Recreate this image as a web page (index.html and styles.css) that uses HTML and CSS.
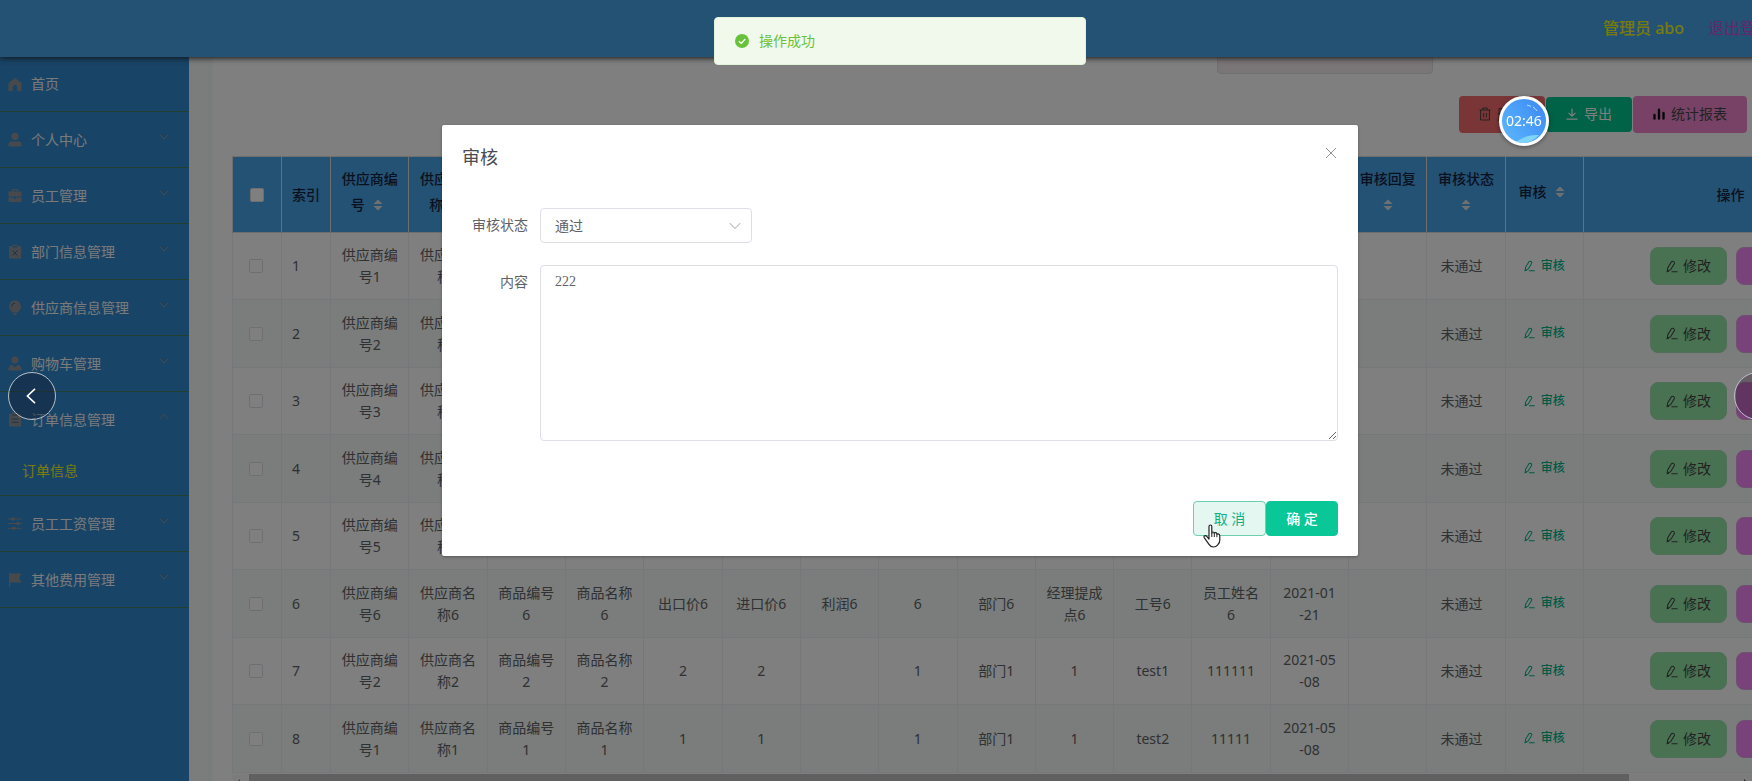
FILE: index.html
```html
<!DOCTYPE html>
<html lang="zh-CN">
<head>
<meta charset="utf-8">
<title>订单信息</title>
<link rel="stylesheet" href="styles.css">
</head>
<body>
<svg class="sprite" aria-hidden="true">
  <symbol id="i-home" viewBox="0 0 14 14"><path fill="currentColor" d="M7 0.5 13.5 5.5V13.5H9.2V9.6A2.2 2.2 0 0 0 4.8 9.6V13.5H0.5V5.5Z"/></symbol>
  <symbol id="i-user" viewBox="0 0 14 14"><circle cx="7" cy="3.8" r="3.6" fill="currentColor"/><path fill="currentColor" d="M.4 14V12.2Q.4 9 3.6 9H10.4Q13.6 9 13.6 12.2V14Z"/></symbol>
  <symbol id="i-case" viewBox="0 0 14 14"><path fill="currentColor" d="M4 3V.5H10V3H13.5V8H.5V3H4ZM5.2 3H8.8V1.7H5.2ZM.5 9H6V10.4H8V9H13.5V13.5H.5Z"/></symbol>
  <symbol id="i-board" viewBox="0 0 14 14"><path fill="currentColor" fill-rule="evenodd" d="M1 1.5H4.5V.3H9.5V1.5H13V14H1ZM4.5 3H9.5V1.6H4.5Z"/><path stroke="#30688f" d="M4.6 6 9.4 11M9.4 6 4.6 11"/></symbol>
  <symbol id="i-bulb" viewBox="0 0 14 14"><path fill="currentColor" d="M7 0A6 6 0 0 1 10.5 10.8L9.6 12H4.4L3.5 10.8A6 6 0 0 1 7 0ZM5 12.8H9L8.2 14.4H5.8Z"/><path stroke="#30688f" fill="none" d="M3.6 6A3.5 3.5 0 0 1 7 2.6"/></symbol>
  <symbol id="i-custom" viewBox="0 0 14 14"><circle cx="7" cy="3.6" r="3.5" fill="currentColor"/><path fill="currentColor" d="M4 8 7 11 10 8Q13.8 9.4 13.8 14H.2Q.2 9.4 4 8Z"/></symbol>
  <symbol id="i-order" viewBox="0 0 14 14"><path fill="currentColor" d="M1 1.5H4V0H10V1.5H13V14H1Z"/><path stroke="#30688f" d="M4 2.5H10M3.5 6.5H10.5M3.5 9.8H10.5"/></symbol>
  <symbol id="i-oper" viewBox="0 0 14 14"><path stroke="currentColor" d="M0 2.5H14M0 7H14M0 11.8H14"/><g fill="currentColor"><circle cx="5" cy="2.5" r="1.7"/><circle cx="10" cy="7" r="1.7"/><circle cx="6" cy="11.8" r="1.7"/></g></symbol>
  <symbol id="i-flag" viewBox="0 0 14 14"><path fill="currentColor" d="M1 0H2.2V1H13.5L11 5.5 13.5 10H2.2V14.5H1Z"/></symbol>
  <symbol id="i-down" viewBox="0 0 12 12"><path fill="none" stroke="currentColor" d="M1.5 3.5 6 8 10.5 3.5"/></symbol>
  <symbol id="i-up" viewBox="0 0 12 12"><path fill="none" stroke="currentColor" d="M1.5 8 6 3.5 10.5 8"/></symbol>
  <symbol id="i-sort" viewBox="0 0 10 12"><path fill="currentColor" d="M.5 5 5 .5 9.5 5ZM.5 7 5 11.5 9.5 7Z"/></symbol>
  <symbol id="i-edit" viewBox="0 0 12 12"><path fill="none" stroke="currentColor" stroke-width="1.1" d="M1.2 11 1.8 7.2 5.4 1.3Q6.2.4 7.6 1.1 8.9 1.9 8.4 3L4.6 9.2ZM1.2 11H3M5.5 11.2H11.6"/></symbol>
  <symbol id="i-trash" viewBox="0 0 12 14"><path fill="none" stroke="currentColor" d="M.5 3H11.5M3.8 3V1H8.2V3M1.6 3V13H10.4V3M4.6 6V10.3M7.4 6V10.3"/></symbol>
  <symbol id="i-export" viewBox="0 0 12 12"><path fill="none" stroke="currentColor" stroke-width="1.2" d="M6 .5V8M2.6 4.8 6 8.2 9.4 4.8M.5 11.2H11.5"/></symbol>
  <symbol id="i-chart" viewBox="0 0 12 12"><path stroke="currentColor" stroke-width="2.4" stroke-linecap="round" d="M1.5 7V10.5M6 1.8V10.5M10.5 5V10.5"/></symbol>
</svg>

<div class="viewport">
  <header class="topbar">
    <span class="who">管理员 abo</span>
    <a class="logout" href="#">退出登录</a>
  </header>

  <div class="shell">
    <nav class="side">
      <a class="item first" href="#"><svg class="ico"><use href="#i-home"/></svg><span>首页</span></a>
      <a class="item" href="#"><svg class="ico"><use href="#i-user"/></svg><span>个人中心</span><svg class="chev"><use href="#i-down"/></svg></a>
      <a class="item" href="#"><svg class="ico"><use href="#i-case"/></svg><span>员工管理</span><svg class="chev"><use href="#i-down"/></svg></a>
      <a class="item" href="#"><svg class="ico"><use href="#i-board"/></svg><span>部门信息管理</span><svg class="chev"><use href="#i-down"/></svg></a>
      <a class="item" href="#"><svg class="ico"><use href="#i-bulb"/></svg><span>供应商信息管理</span><svg class="chev"><use href="#i-down"/></svg></a>
      <a class="item" href="#"><svg class="ico"><use href="#i-custom"/></svg><span>购物车管理</span><svg class="chev"><use href="#i-down"/></svg></a>
      <a class="item open" href="#"><svg class="ico"><use href="#i-order"/></svg><span>订单信息管理</span><svg class="chev"><use href="#i-up"/></svg></a>
      <a class="sub" href="#">订单信息</a>
      <a class="item" href="#"><svg class="ico"><use href="#i-oper"/></svg><span>员工工资管理</span><svg class="chev"><use href="#i-down"/></svg></a>
      <a class="item" href="#"><svg class="ico"><use href="#i-flag"/></svg><span>其他费用管理</span><svg class="chev"><use href="#i-down"/></svg></a>
    </nav>

    <main class="page">
      <div class="search"><input class="search-box" type="text" aria-label="查询"></div>
      <div class="tools">
        <button class="tool del"><svg class="t-trash"><use href="#i-trash"/></svg>删除</button>
        <button class="tool exp"><svg><use href="#i-export"/></svg>导出</button>
        <button class="tool rep"><svg><use href="#i-chart"/></svg>统计报表</button>
      </div>
      <table class="grid">
        <colgroup><col class="c-narrow"><col class="c-narrow"><col span="16"><col class="c-ops"></colgroup>
        <thead>
          <tr>
            <th class="plain"><input type="checkbox" aria-label="全选"></th>
            <th class="plain idx">索引</th>
            <th>供应商编<br>号 <svg><use href="#i-sort"/></svg></th>
            <th>供应商名<br>称 <svg><use href="#i-sort"/></svg></th>
            <th>商品编号<br><svg><use href="#i-sort"/></svg></th>
            <th>商品名称<br><svg><use href="#i-sort"/></svg></th>
            <th>出口价<br><svg><use href="#i-sort"/></svg></th>
            <th>进口价<br><svg><use href="#i-sort"/></svg></th>
            <th>利润 <svg><use href="#i-sort"/></svg></th>
            <th>数量 <svg><use href="#i-sort"/></svg></th>
            <th>部门 <svg><use href="#i-sort"/></svg></th>
            <th>经理提成<br>点 <svg><use href="#i-sort"/></svg></th>
            <th>工号 <svg><use href="#i-sort"/></svg></th>
            <th>员工姓名<br><svg><use href="#i-sort"/></svg></th>
            <th>登记日期<br><svg><use href="#i-sort"/></svg></th>
            <th>审核回复<br><svg><use href="#i-sort"/></svg></th>
            <th>审核状态<br><svg><use href="#i-sort"/></svg></th>
            <th>审核 <svg><use href="#i-sort"/></svg></th>
            <th class="plain">操作</th>
          </tr>
        </thead>
        <tbody>
          <tr><td><input type="checkbox" aria-label="选择1"></td><td class="idx">1</td><td>供应商编<br>号1</td><td>供应商名<br>称1</td><td>商品编号<br>1</td><td>商品名称<br>1</td><td>出口价1</td><td>进口价1</td><td>利润1</td><td>1</td><td>部门1</td><td>经理提成<br>点1</td><td>工号1</td><td>员工姓名<br>1</td><td>2021-01<br>-21</td><td></td><td class="state">未通过</td><td><button class="audit"><svg><use href="#i-edit"/></svg>审核</button></td><td><div class="ops"><button class="op edit"><svg><use href="#i-edit"/></svg>修改</button><button class="op drop"><svg><use href="#i-trash"/></svg>删除</button></div></td></tr>
          <tr><td><input type="checkbox" aria-label="选择2"></td><td class="idx">2</td><td>供应商编<br>号2</td><td>供应商名<br>称2</td><td>商品编号<br>2</td><td>商品名称<br>2</td><td>出口价2</td><td>进口价2</td><td>利润2</td><td>2</td><td>部门2</td><td>经理提成<br>点2</td><td>工号2</td><td>员工姓名<br>2</td><td>2021-01<br>-21</td><td></td><td class="state">未通过</td><td><button class="audit"><svg><use href="#i-edit"/></svg>审核</button></td><td><div class="ops"><button class="op edit"><svg><use href="#i-edit"/></svg>修改</button><button class="op drop"><svg><use href="#i-trash"/></svg>删除</button></div></td></tr>
          <tr><td><input type="checkbox" aria-label="选择3"></td><td class="idx">3</td><td>供应商编<br>号3</td><td>供应商名<br>称3</td><td>商品编号<br>3</td><td>商品名称<br>3</td><td>出口价3</td><td>进口价3</td><td>利润3</td><td>3</td><td>部门3</td><td>经理提成<br>点3</td><td>工号3</td><td>员工姓名<br>3</td><td>2021-01<br>-21</td><td></td><td class="state">未通过</td><td><button class="audit"><svg><use href="#i-edit"/></svg>审核</button></td><td><div class="ops"><button class="op edit"><svg><use href="#i-edit"/></svg>修改</button><button class="op drop"><svg><use href="#i-trash"/></svg>删除</button></div></td></tr>
          <tr><td><input type="checkbox" aria-label="选择4"></td><td class="idx">4</td><td>供应商编<br>号4</td><td>供应商名<br>称4</td><td>商品编号<br>4</td><td>商品名称<br>4</td><td>出口价4</td><td>进口价4</td><td>利润4</td><td>4</td><td>部门4</td><td>经理提成<br>点4</td><td>工号4</td><td>员工姓名<br>4</td><td>2021-01<br>-21</td><td></td><td class="state">未通过</td><td><button class="audit"><svg><use href="#i-edit"/></svg>审核</button></td><td><div class="ops"><button class="op edit"><svg><use href="#i-edit"/></svg>修改</button><button class="op drop"><svg><use href="#i-trash"/></svg>删除</button></div></td></tr>
          <tr><td><input type="checkbox" aria-label="选择5"></td><td class="idx">5</td><td>供应商编<br>号5</td><td>供应商名<br>称5</td><td>商品编号<br>5</td><td>商品名称<br>5</td><td>出口价5</td><td>进口价5</td><td>利润5</td><td>5</td><td>部门5</td><td>经理提成<br>点5</td><td>工号5</td><td>员工姓名<br>5</td><td>2021-01<br>-21</td><td></td><td class="state">未通过</td><td><button class="audit"><svg><use href="#i-edit"/></svg>审核</button></td><td><div class="ops"><button class="op edit"><svg><use href="#i-edit"/></svg>修改</button><button class="op drop"><svg><use href="#i-trash"/></svg>删除</button></div></td></tr>
          <tr><td><input type="checkbox" aria-label="选择6"></td><td class="idx">6</td><td>供应商编<br>号6</td><td>供应商名<br>称6</td><td>商品编号<br>6</td><td>商品名称<br>6</td><td>出口价6</td><td>进口价6</td><td>利润6</td><td>6</td><td>部门6</td><td>经理提成<br>点6</td><td>工号6</td><td>员工姓名<br>6</td><td>2021-01<br>-21</td><td></td><td class="state">未通过</td><td><button class="audit"><svg><use href="#i-edit"/></svg>审核</button></td><td><div class="ops"><button class="op edit"><svg><use href="#i-edit"/></svg>修改</button><button class="op drop"><svg><use href="#i-trash"/></svg>删除</button></div></td></tr>
          <tr><td><input type="checkbox" aria-label="选择7"></td><td class="idx">7</td><td>供应商编<br>号2</td><td>供应商名<br>称2</td><td>商品编号<br>2</td><td>商品名称<br>2</td><td>2</td><td>2</td><td></td><td>1</td><td>部门1</td><td>1</td><td>test1</td><td>111111</td><td>2021-05<br>-08</td><td></td><td class="state">未通过</td><td><button class="audit"><svg><use href="#i-edit"/></svg>审核</button></td><td><div class="ops"><button class="op edit"><svg><use href="#i-edit"/></svg>修改</button><button class="op drop"><svg><use href="#i-trash"/></svg>删除</button></div></td></tr>
          <tr><td><input type="checkbox" aria-label="选择8"></td><td class="idx">8</td><td>供应商编<br>号1</td><td>供应商名<br>称1</td><td>商品编号<br>1</td><td>商品名称<br>1</td><td>1</td><td>1</td><td></td><td>1</td><td>部门1</td><td>1</td><td>test2</td><td>11111</td><td>2021-05<br>-08</td><td></td><td class="state">未通过</td><td><button class="audit"><svg><use href="#i-edit"/></svg>审核</button></td><td><div class="ops"><button class="op edit"><svg><use href="#i-edit"/></svg>修改</button><button class="op drop"><svg><use href="#i-trash"/></svg>删除</button></div></td></tr>
        </tbody>
      </table>
      <div class="hscroll"><i class="arrow left"></i><i class="thumb"></i><i class="arrow right"></i></div>
    </main>
  </div>

  <div class="mask">
    <section class="dialog" role="dialog" aria-labelledby="dlg-title">
      <div class="dlg-head">
        <h2 id="dlg-title">审核</h2>
        <button class="close" aria-label="关闭"><svg viewBox="0 0 12 12"><path stroke="currentColor" d="M1 1 11 11M11 1 1 11"/></svg></button>
      </div>
      <form class="form">
        <label for="state">审核状态</label>
        <div class="pick"><select id="state"><option>通过</option></select><svg class="chev"><use href="#i-down"/></svg></div>
        <label for="content">内容</label>
        <textarea id="content">222</textarea>
      </form>
      <div class="dlg-foot">
        <button class="btn cancel">取 消</button>
        <button class="btn ok">确 定</button>
      </div>
      <svg class="hand" viewBox="0 0 18 24"><path fill="#fff" stroke="#222" stroke-width="1.2" stroke-linejoin="round" d="M6 15V2.6Q6 1 7.4 1T8.8 2.6V9.2Q8.8 8 10 8T11.3 9.4Q11.6 8.6 12.6 8.7 13.8 8.8 13.9 10.3 14.4 9.6 15.3 9.9 16.8 10.3 16.8 12V16Q16.8 19 14.8 20.8 13 23 10.5 23 7.5 23 6 20.4L1.2 13.6Q.6 12.4 1.6 11.8 2.8 11.3 4 12.6Z"/><path stroke="#222" d="M8.8 9V13M11.3 9.4V13M13.9 10.4V13.2"/></svg>
    </section>
  </div>

  <div class="toast" role="status">
    <svg viewBox="0 0 14 14"><circle cx="7" cy="7" r="7" fill="#67c23a"/><path fill="none" stroke="#fff" stroke-width="1.3" d="M3.8 7.2 6.2 9.4 10.2 5"/></svg>
    <span>操作成功</span>
  </div>
</div>

<div class="timer"><svg viewBox="0 0 44 44"><path fill="#7fd4fb" d="M14 43Q24 35 37 36 31 43 22 44Z"/><path fill="none" stroke="#b9defc" d="M25 6 29 7.4M31 8Q33 9 35 12"/></svg><span>02:46</span></div>
<button class="nav prev" aria-label="上一张"><svg viewBox="0 0 10 16"><path fill="none" stroke="#fff" stroke-width="1.6" d="M9 .8 1.4 8 9 15.2"/></svg></button>
<button class="nav next" aria-label="下一张"><svg viewBox="0 0 10 16"><path fill="none" stroke="#fff" stroke-width="1.6" d="M1 .8 8.6 8 1 15.2"/></svg></button>
</body>
</html>
```

FILE: styles.css
```css
* { box-sizing: border-box; }
html, body { height: 100%; }
body {
  margin: 0;
  overflow: hidden;
  background: #fff;
  color: #606266;
  font: 14px/22px "Noto Sans", "Noto Sans CJK SC", sans-serif;
}
button, select { font: inherit; cursor: pointer; }
a { text-decoration: none; }
svg { flex: none; }
.sprite { display: none; }

/* the layout is a little wider than the window */
.viewport {
  position: relative;
  width: calc(100% + 48px);
  height: 100%;
  overflow: hidden;
  display: flex;
  flex-direction: column;
}

.topbar {
  position: relative;
  z-index: 1;
  flex: none;
  display: flex;
  align-items: center;
  justify-content: flex-end;
  gap: 24px;
  height: 57px;
  padding: 0 28px 2px 0;
  background: #49a4e8;
  box-shadow: 0 1px 6px #222;
  font-size: 16px;
}
.who { color: #ff0; opacity: 0.9; font-weight: 500; }
.logout { color: #c94fd6; }

.shell { flex: 1; min-height: 0; display: flex; }

.side { flex: none; width: 189px; background: #3188ce; }
.item {
  display: flex;
  align-items: center;
  height: 56px;
  padding: 0 19px 0 8px;
  border-bottom: 1px solid #42805f;
  color: #f4f4f4;
}
.item.first { height: 55px; }
.item.open { height: 55px; border-bottom: 0; }
.item .ico { width: 14px; height: 15px; margin-right: 9px; color: #909399; }
.item .chev { width: 12px; height: 12px; margin: 0 0 5px auto; color: #909399; }
.sub {
  display: flex;
  align-items: center;
  height: 49px;
  padding-left: 22px;
  border-bottom: 1px solid #42805f;
  color: #f4f420;
}

.page {
  flex: 1;
  min-width: 0;
  border-left: 24px solid #f5faf7;
  padding-left: 19px;
}
.search { display: flex; justify-content: flex-end; height: 17px; padding-right: 367px; align-items: flex-end; }
.search-box {
  width: 216px;
  height: 40px;
  border: 1px solid #dcdfe6;
  border-radius: 4px;
  background: #f4ebef;
}

.tools {
  display: flex;
  justify-content: flex-end;
  align-items: center;
  gap: 1px;
  height: 82px;
  padding: 0 53px 2px 0;
}
.tool {
  display: flex;
  align-items: center;
  justify-content: center;
  gap: 6px;
  height: 37px;
  padding: 0 20px;
  border: 0;
  border-radius: 4px;
  color: #444;
}
.tool svg { width: 12px; height: 12px; }
.tool .t-trash { height: 14px; }
.del { background: #f56c6c; }
.exp { height: 35px; background: #00c48f; color: #fff; }
.rep { background: #ee85cb; }
.rep svg { color: #111; }

.grid {
  table-layout: fixed;
  width: 1646px;
  border-collapse: collapse;
  text-align: center;
}
.c-narrow { width: 49px; }
.c-ops { width: 294px; }
.grid th, .grid td { padding: 0; border: 1px solid #ebeef5; }
.grid th {
  height: 76px;
  padding-bottom: 6px;
  border-color: #ddd;
  background: #49a4e8;
  color: #14233c;
  font-weight: 500;
  line-height: 26px;
}
.grid th.plain { padding-bottom: 0; }
.grid th svg { width: 10px; height: 12px; margin: 0 5px; vertical-align: -1px; color: #e0e0e0; }
.grid td { height: 67px; }
.grid tr:nth-child(even) td { height: 68px; background: #f5faf7; }
.grid .idx { padding-left: 10px; text-align: left; }
.grid .state { padding-right: 9px; }
.grid input {
  appearance: none;
  display: block;
  width: 14px;
  height: 14px;
  margin: 0 auto;
  border: 1px solid #dcdfe6;
  border-radius: 2px;
  background: #fff;
}
.grid td input { margin-left: 16px; }
.audit {
  display: inline-flex;
  align-items: center;
  gap: 6px;
  padding: 0;
  border: 0;
  background: none;
  color: #00b488;
  font-size: 12px;
  font-weight: 500;
}
.audit svg { width: 11px; height: 12px; }
.ops { display: flex; justify-content: center; gap: 9px; padding-left: 2px; }
.op {
  display: flex;
  align-items: center;
  justify-content: center;
  gap: 5px;
  width: 77px;
  height: 38px;
  padding: 0;
  border: 1px solid #dcdfe6;
  border-radius: 8px;
  color: #444;
}
.op svg { width: 12px; height: 13px; }
.edit { background: #92e4a4; border-color: #a0dcb0; }
.drop { background: #f585f5; border-color: #e0a0e0; }

.hscroll { display: flex; align-items: center; gap: 9px; width: 1520px; height: 17px; margin-top: 1px; background: #f8f8f8; }
.hscroll .thumb { flex: none; width: 1380px; height: 17px; background: #c1c1c1; }
.arrow { border: 4px solid transparent; }
.arrow.left { border-right-color: #888; }
.arrow.right { margin-left: auto; border-left-color: #444; }

.mask {
  position: absolute;
  inset: 0;
  z-index: 2;
  display: flex;
  justify-content: center;
  align-items: flex-start;
  padding-top: 125px;
  background: rgba(0, 0, 0, 0.5);
}
.dialog {
  position: relative;
  width: 916px;
  padding: 20px 20px;
  border-radius: 2px;
  background: #fff;
  box-shadow: 0 1px 3px rgba(0, 0, 0, 0.3);
}
.dlg-head { display: flex; justify-content: space-between; align-items: flex-start; height: 63px; }
.dlg-head h2 { margin: 0; font-size: 18px; font-weight: 400; line-height: 24px; color: #4a4c50; }
.close { padding: 0 1px; border: 0; background: none; color: #909399; line-height: 0; }
.close svg { display: block; width: 12px; height: 12px; margin-top: 2px; }
.form {
  display: grid;
  grid-template-columns: 66px 1fr;
  gap: 22px 12px;
}
.form label { padding-top: 6px; text-align: right; }
.pick { position: relative; width: 212px; }
.pick select {
  appearance: none;
  width: 100%;
  height: 35px;
  padding: 0 14px;
  border: 1px solid #dcdfe6;
  border-radius: 4px;
  background: #fff;
  color: #606266;
}
.pick .chev { position: absolute; right: 10px; top: 11px; width: 14px; height: 14px; color: #c0c4cc; pointer-events: none; }
.form textarea {
  display: block;
  width: 100%;
  height: 176px;
  padding: 5px 14px;
  border: 1px solid #dcdfe6;
  border-radius: 4px;
  color: #606266;
  font: 14px/21px "Liberation Serif", serif;
  resize: vertical;
}
.dlg-foot { display: flex; justify-content: flex-end; padding-top: 60px; }
.btn { width: 72px; height: 35px; padding: 0; border: 1px solid #09c797; border-radius: 4px; }
.cancel { width: 73px; background: #e4f8f1; border-color: #6fcdb0; color: #0fb088; }
.ok { background: #09c797; color: #fff; font-weight: 500; }
.hand { position: absolute; left: 761px; bottom: 8px; width: 18px; height: 24px; }

.toast {
  position: absolute;
  z-index: 3;
  top: 17px;
  left: 50%;
  transform: translateX(-50%);
  display: flex;
  align-items: center;
  gap: 10px;
  width: 372px;
  height: 48px;
  padding: 0 20px;
  border: 1px solid #e1f3d8;
  border-radius: 4px;
  background: #f0f9eb;
  color: #67c23a;
}
.toast svg { width: 14px; height: 14px; }

.timer {
  position: fixed;
  z-index: 4;
  top: 96px;
  right: 203px;
  display: grid;
  place-items: center;
  width: 50px;
  height: 50px;
  border: 3px solid #fff;
  border-radius: 50%;
  background: linear-gradient(55deg, #5cb8fb, #3b87f7);
  box-shadow: 0 1px 4px rgba(0, 0, 0, 0.4);
  color: #fff;
}
.timer > * { grid-area: 1 / 1; }
.timer svg { width: 44px; height: 44px; }

.nav {
  position: fixed;
  z-index: 4;
  top: 372px;
  display: grid;
  place-items: center;
  width: 48px;
  height: 48px;
  padding: 0 2px 0 0;
  border: 1px solid #b8c0c8;
  border-radius: 50%;
  background: rgba(20, 30, 50, 0.4);
}
.nav svg { width: 10px; height: 16px; }
.prev { left: 8px; }
.next { right: -30px; background: rgba(40, 20, 40, 0.3); }
```
